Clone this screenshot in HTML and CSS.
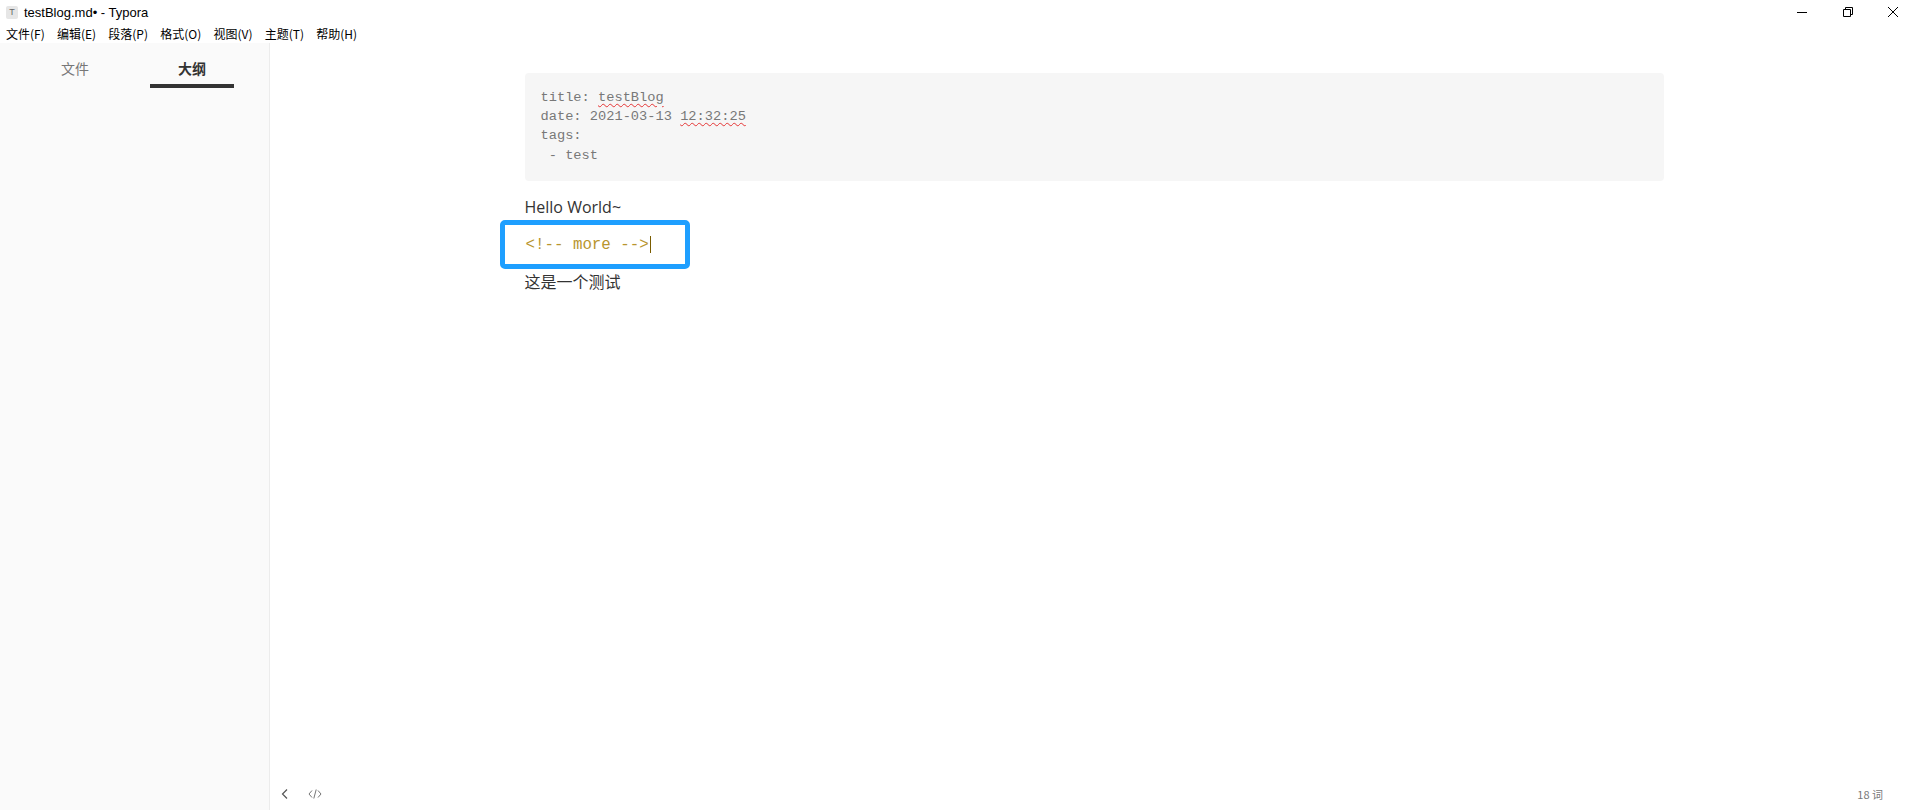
FILE: index.html
```html
<!DOCTYPE html>
<html>
<head>
<meta charset="utf-8">
<link rel="stylesheet" href="styles.css">
</head>
<body>
<div class="window">
  <div class="titlebar">
    <div class="app-icon">T</div>
    <div class="title">testBlog.md• - Typora</div>
    <div class="controls">
      <svg class="ctl" width="12" height="12" viewBox="0 0 12 12"><path d="M1 6.5h10" stroke="#000" stroke-width="1" fill="none"/></svg>
      <svg class="ctl" width="12" height="12" viewBox="0 0 12 12"><path d="M1.5 3.5h7v7h-7z M3.5 3.5v-2h7v7h-2" stroke="#000" stroke-width="1" fill="none"/></svg>
      <svg class="ctl" width="12" height="12" viewBox="0 0 12 12"><path d="M1 1l10 10M11 1L1 11" stroke="#000" stroke-width="1" fill="none"/></svg>
    </div>
  </div>
  <div class="menubar">
    <span class="menu">文件(F)</span>
    <span class="menu">编辑(E)</span>
    <span class="menu">段落(P)</span>
    <span class="menu">格式(O)</span>
    <span class="menu">视图(V)</span>
    <span class="menu">主题(T)</span>
    <span class="menu">帮助(H)</span>
  </div>
  <div class="body">
    <aside class="sidebar">
      <div class="tabs">
        <div class="tab">文件</div>
        <div class="tab active">大纲</div>
      </div>
    </aside>
    <main class="main">
      <div class="editor">
        <div class="content">
          <pre class="front"><span class="k">title: </span><span class="spell">testBlog</span>
date: 2021-03-13 <span class="spell">12:32:25</span>
tags:
 - test</pre>
          <p class="para">Hello World~</p>
          <div class="comment-box"><span class="comment">&lt;!-- more --&gt;</span><span class="caret"></span></div>
          <p class="para">这是一个测试</p>
        </div>
      </div>
      <div class="footer">
        <div class="foot-left">
          <svg width="10" height="12" viewBox="0 0 10 12"><path d="M7 1.5L2.5 6L7 10.5" stroke="#555" stroke-width="1.2" fill="none"/></svg>
          <svg width="14" height="12" viewBox="0 0 14 12"><path d="M4 2.5L1 6l3 3.5M10 2.5L13 6l-3 3.5M8.2 1.5L5.8 10.5" stroke="#666" stroke-width="0.9" fill="none"/></svg>
        </div>
        <div class="words">18 词</div>
      </div>
    </main>
  </div>
</div>
</body>
</html>
```
FILE: styles.css
```css
* { box-sizing: border-box; }
html, body { margin: 0; padding: 0; }
body {
  width: 1918px;
  height: 810px;
  overflow: hidden;
  background: #fff;
  font-family: "Noto Sans CJK SC", "Liberation Sans", sans-serif;
  color: #000;
}
.window { display: flex; flex-direction: column; height: 810px; }
.titlebar {
  height: 24px;
  display: flex;
  align-items: center;
  padding-left: 6px;
}
.app-icon {
  width: 12px; height: 13px;
  background: #e6e6e6;
  border-radius: 2px;
  font-size: 9px;
  line-height: 13px;
  text-align: center;
  color: #666;
  font-family: "Liberation Sans", sans-serif;
}
.title {
  margin-left: 6px;
  font-family: "Liberation Sans", "Noto Sans CJK SC", sans-serif;
  font-size: 13px;
  color: #000;
}
.controls {
  margin-left: auto;
  display: flex;
  align-items: center;
  height: 24px;
}
.ctl { margin: 0 16.5px 0 17px; }
.controls .ctl:last-child { margin-right: 19px; }
.menubar {
  height: 19px;
  display: flex;
  align-items: center;
  gap: 12.2px;
  padding-left: 6px;
  font-size: 12px;
  color: #000;
}
.menu { line-height: 19px; }
.body { flex: 1; display: flex; min-height: 0; }
.sidebar {
  width: 270px;
  background: #fafafa;
  border-right: 1px solid #ececec;
}
.tabs {
  display: flex;
  justify-content: center;
  gap: 33px;
  padding-top: 16px;
  padding-right: 2px;
}
.tab {
  width: 84px;
  text-align: center;
  font-size: 14px;
  color: #777;
  height: 29px;
  line-height: 18px;
}
.tab.active {
  color: #333;
  font-weight: bold;
  border-bottom: 4px solid #333;
}
.main { flex: 1; display: flex; flex-direction: column; min-width: 0; }
.editor { flex: 1; display: flex; justify-content: center; padding-top: 30px; }
.content { width: 1139px; }
.front {
  margin: 0;
  background: #f6f6f6;
  border-radius: 4px;
  padding: 15px 16px 16px;
  font-family: "Liberation Mono", monospace;
  font-size: 13.7px;
  line-height: 19.2px;
  color: #787878;
  height: 108px;
}
.spell {
  text-decoration: underline wavy #e53535;
  text-decoration-thickness: 1px;
  text-underline-offset: 2px;
}
.para {
  margin: 0;
  font-family: "Open Sans", "Noto Sans CJK SC", sans-serif;
  font-size: 16px;
  line-height: 26px;
  color: #333;
}
.front + .para { margin-top: 13px; }
.comment-box {
  margin-left: -25px;
  width: 190px;
  height: 49px;
  border: 5px solid #1e9fff;
  border-radius: 5px;
  padding-left: 21px;
  display: flex;
  align-items: center;
}
.comment {
  font-family: "Liberation Mono", monospace;
  font-size: 15.8px;
  color: #b8952e;
}
.caret {
  display: inline-block;
  width: 1px;
  height: 17px;
  background: #7a5c00;
  margin-left: 1px;
}
.footer {
  height: 26px;
  display: flex;
  align-items: center;
  padding: 0 35px 0 10px;
  margin-bottom: 3px;
}
.foot-left { display: flex; align-items: center; gap: 18px; }
.words {
  margin-left: auto;
  font-size: 11px;
  color: #777;
}
```
